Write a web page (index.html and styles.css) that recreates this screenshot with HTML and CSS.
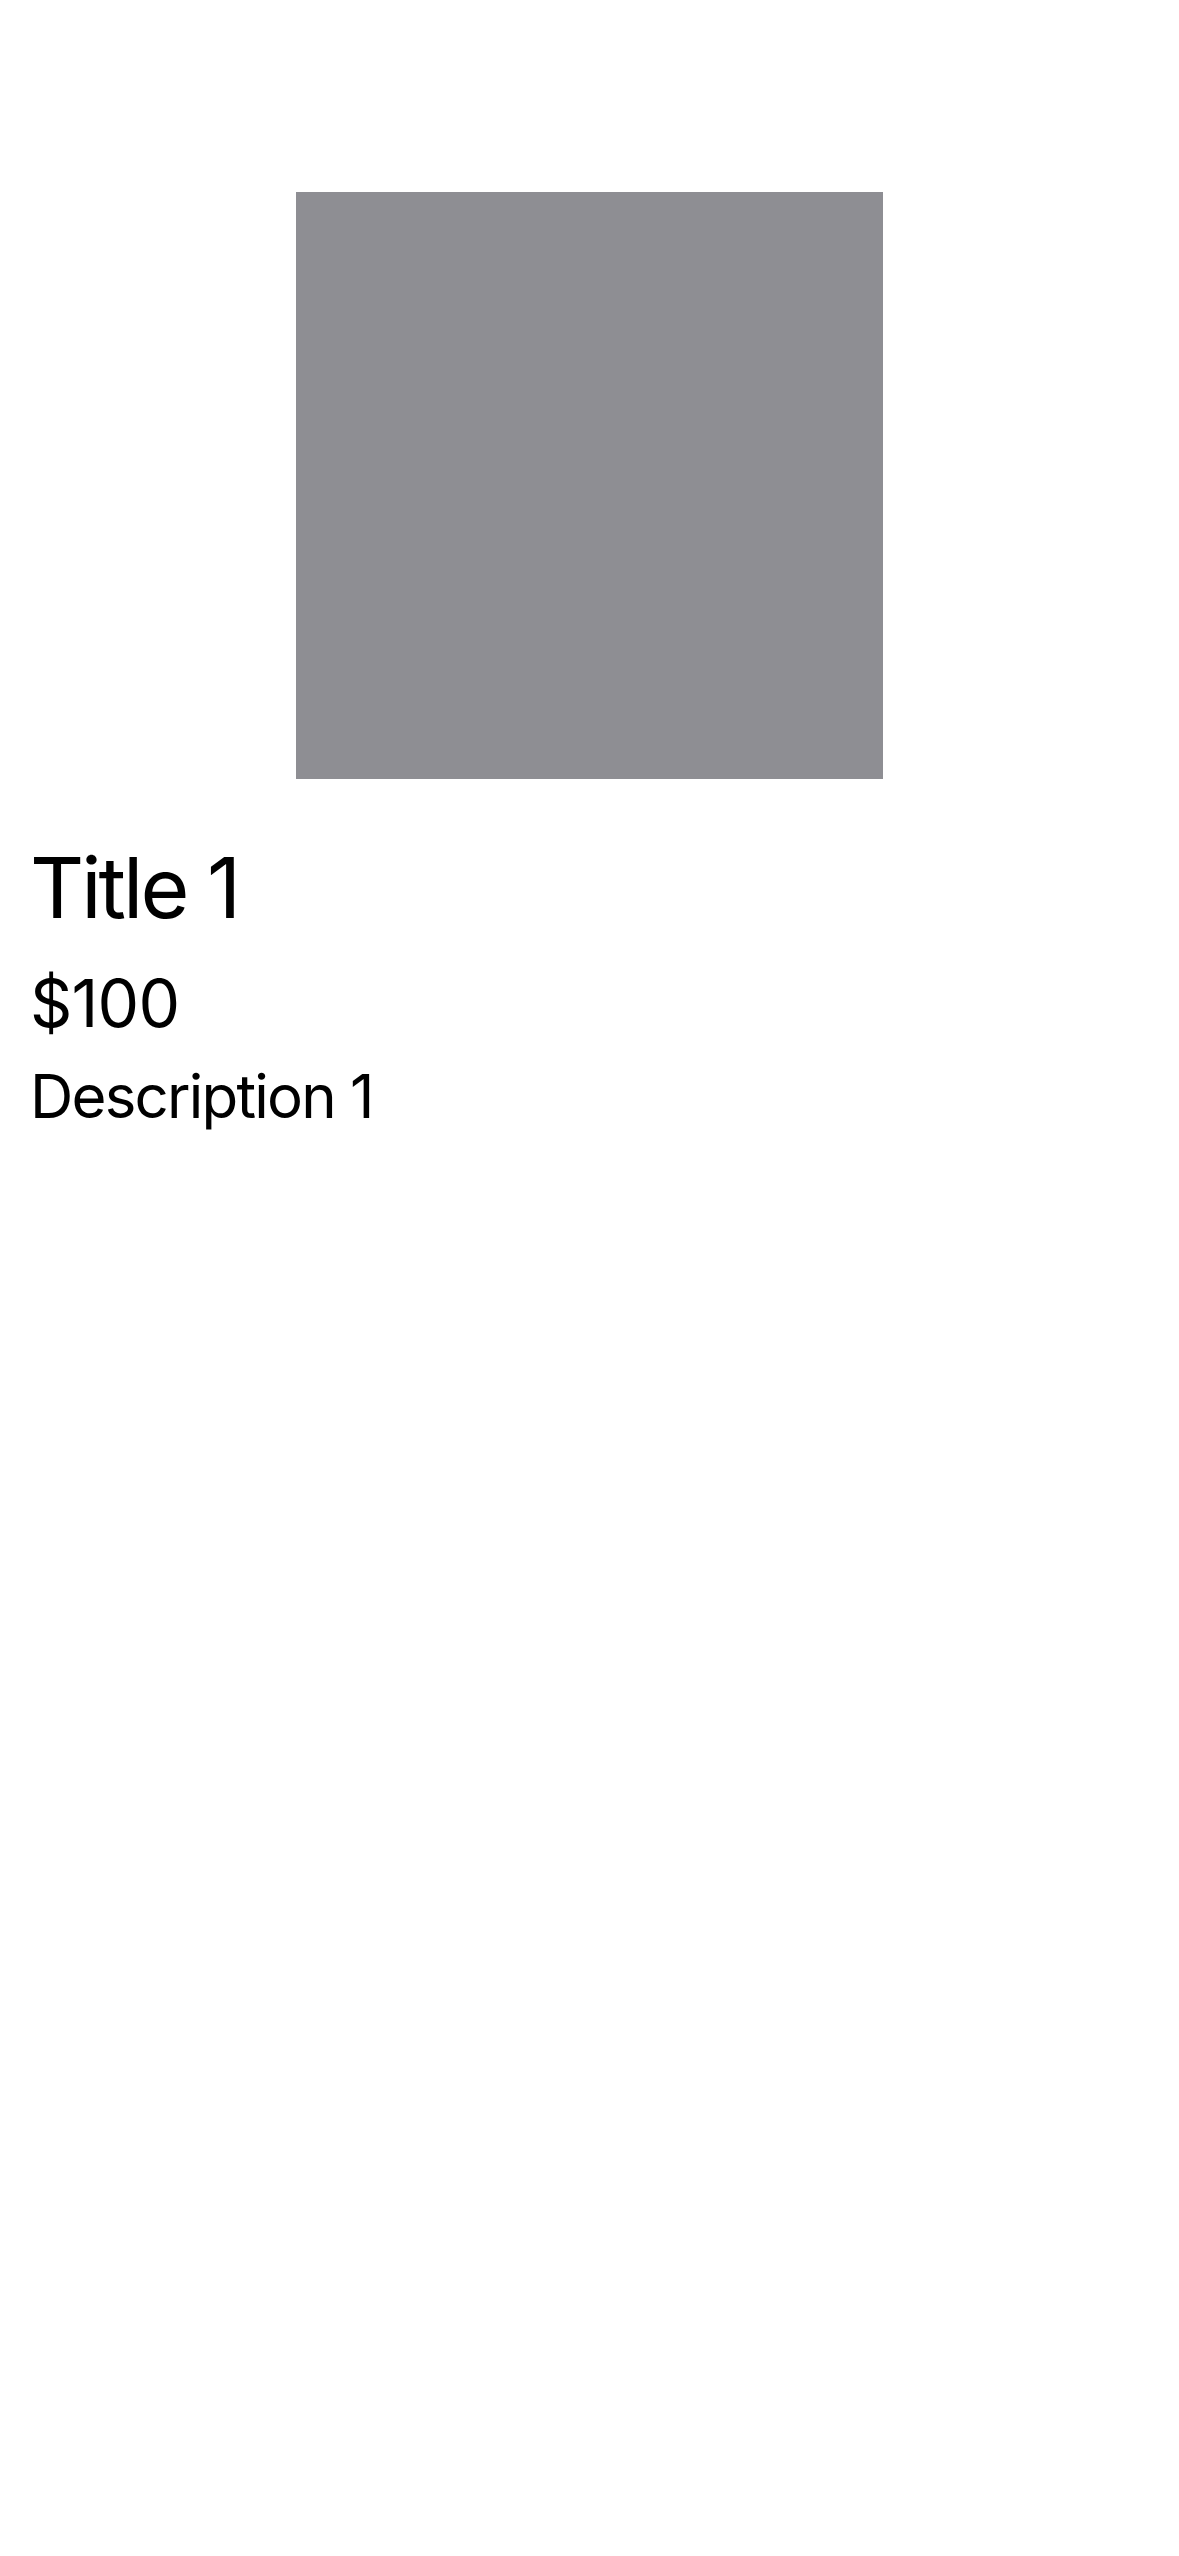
FILE: index.html
```html
<!DOCTYPE html>
<html>
<head>
<meta charset="utf-8">
<link rel="stylesheet" href="styles.css">
</head>
<body>
<main class="page">
  <div class="image-wrap">
    <div class="placeholder"></div>
  </div>
  <div class="info">
    <h1 class="title">Title 1</h1>
    <p class="price">$100</p>
    <p class="desc">Description 1</p>
  </div>
</main>
</body>
</html>
```

FILE: styles.css
```css
html, body {
  margin: 0;
  padding: 0;
  background: #ffffff;
}
body {
  width: 1179px;
  height: 2556px;
  font-family: Inter, "Noto Sans", "Liberation Sans", sans-serif;
  color: #000;
}
.page {
  padding-top: 192px;
  display: flex;
  flex-direction: column;
}
.image-wrap {
  display: flex;
  justify-content: center;
}
.placeholder {
  width: 587px;
  height: 587px;
  background: #8e8e93;
}
.info {
  padding-left: 30px;
  display: flex;
  flex-direction: column;
}
.title {
  margin: 67px 0 0 0;
  font-size: 84px;
  font-weight: 400;
  line-height: 1;
  letter-spacing: -3px;
}
.price {
  margin: 40px 0 0 0;
  font-size: 66px;
  line-height: 1;
  letter-spacing: -0.8px;
}
.desc {
  margin: 30px 0 0 0;
  font-size: 60px;
  line-height: 1;
  letter-spacing: -1.8px;
}
```
